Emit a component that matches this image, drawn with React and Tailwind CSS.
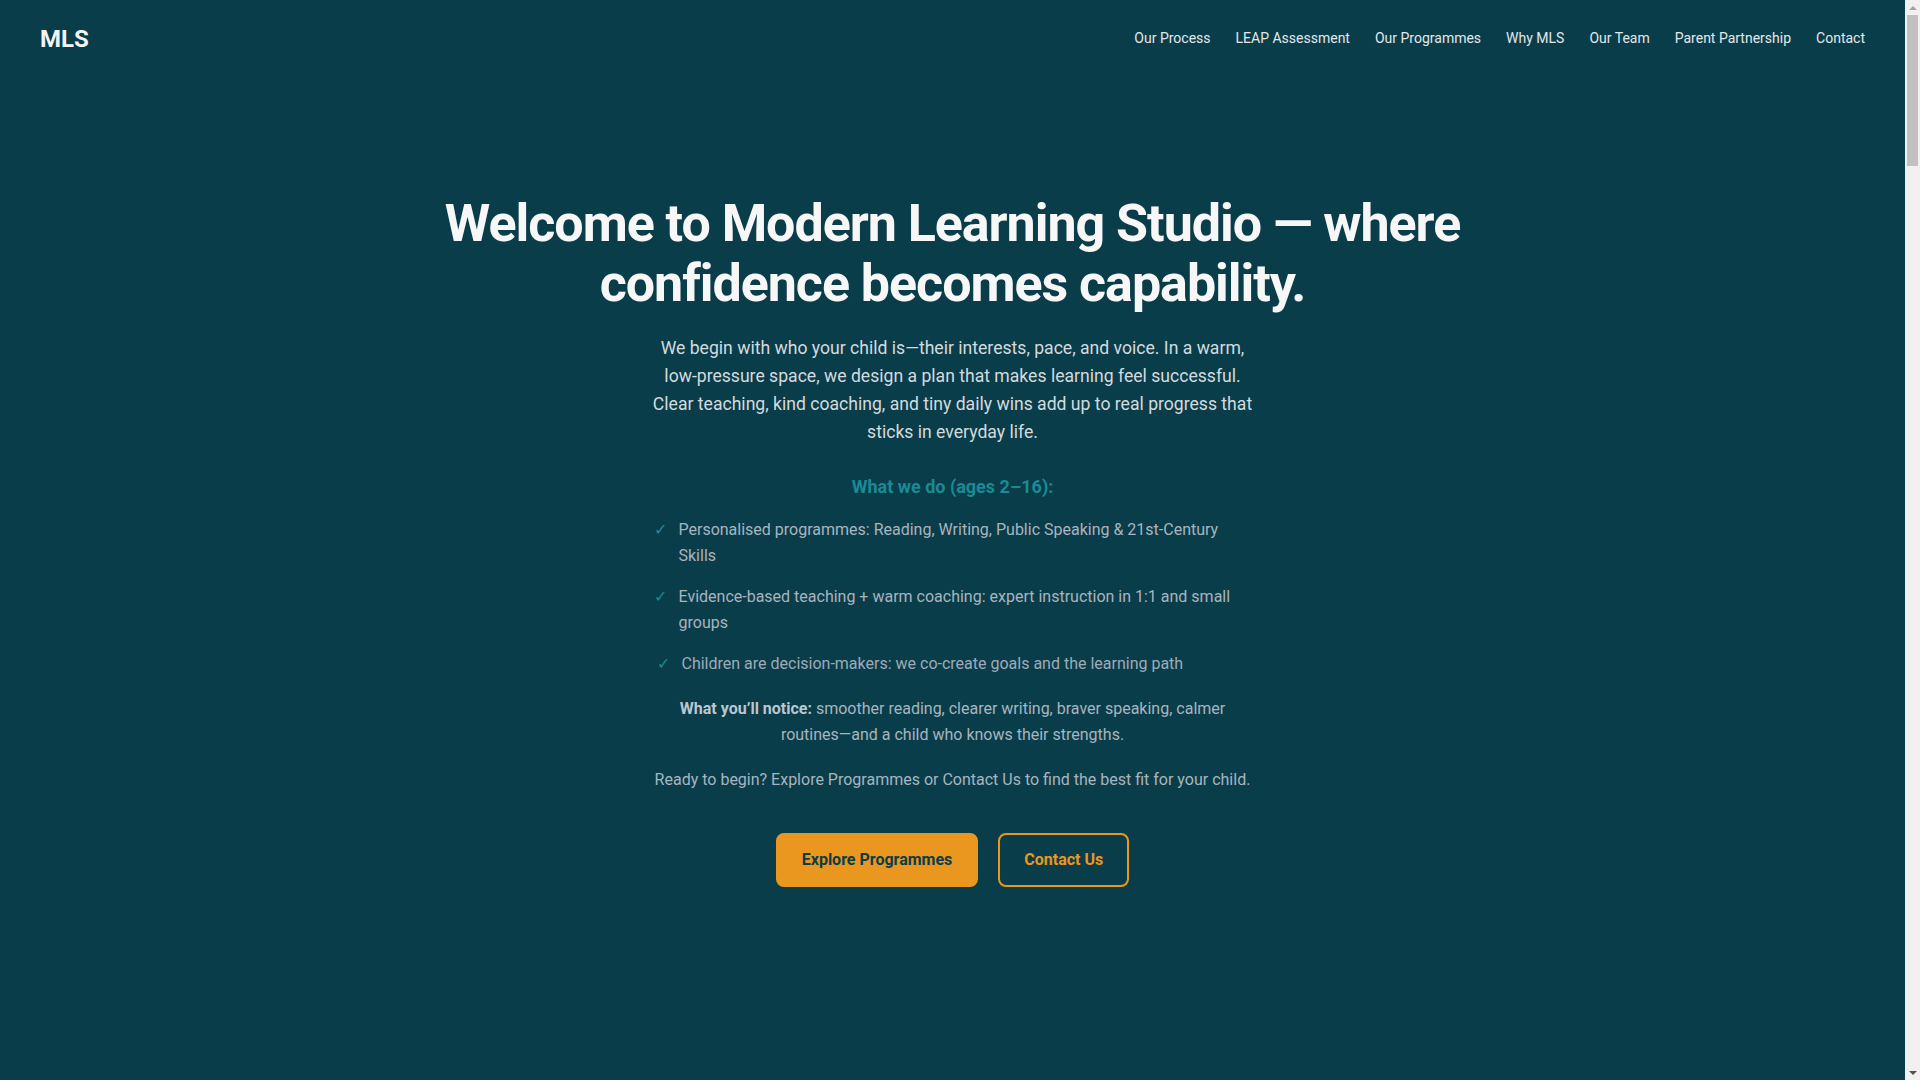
import React from "react";

const navLinks = [
  "Our Process",
  "LEAP Assessment",
  "Our Programmes",
  "Why MLS",
  "Our Team",
  "Parent Partnership",
  "Contact",
];

const whatWeDo = [
  "Personalised programmes: Reading, Writing, Public Speaking & 21st-Century Skills",
  "Evidence-based teaching + warm coaching: expert instruction in 1:1 and small groups",
  "Children are decision-makers: we co-create goals and the learning path",
];

function Scrollbar() {
  return (
    <div className="fixed top-0 right-0 h-screen w-[15px] bg-[#f1f1f1] flex flex-col items-center">
      <div className="h-[15px] flex items-center justify-center">
        <div className="w-0 h-0 border-l-[4px] border-r-[4px] border-b-[4px] border-l-transparent border-r-transparent border-b-[#a3a3a3]" />
      </div>
      <div className="w-[11px] h-[151px] bg-[#c1c1c1]" />
      <div className="flex-1" />
      <div className="h-[15px] flex items-center justify-center">
        <div className="w-0 h-0 border-l-[4px] border-r-[4px] border-t-[4px] border-l-transparent border-r-transparent border-t-[#505050]" />
      </div>
    </div>
  );
}

export default function App() {
  return (
    <div className="bg-[#0a3d4a] min-h-screen font-['Roboto','Liberation_Sans',sans-serif]">
      <div className="mr-[15px]">
        <header className="h-[77px] px-10 flex items-center justify-between">
          <a href="#" className="text-[24px] font-bold text-[#f3f4f4] leading-none">
            MLS
          </a>
          <nav className="flex items-center gap-[25px]">
            {navLinks.map((link) => (
              <a key={link} href="#" className="text-[14px] text-[#e2e8ea]">
                {link}
              </a>
            ))}
          </nav>
        </header>

        <section className="flex flex-col items-center text-center pt-[117px] pb-[150px]">
          <h1 className="text-[52px] leading-[60px] font-bold tracking-[-0.02em] text-[#f7f7f7] max-w-[1100px]">
            Welcome to Modern Learning Studio — where confidence becomes capability.
          </h1>

          <p className="mt-5 max-w-[600px] text-[17.6px] leading-[28px] text-[#d3dbdf]">
            We begin with who your child is—their interests, pace, and voice. In a warm,
            low-pressure space, we design a plan that makes learning feel successful.
            Clear teaching, kind coaching, and tiny daily wins add up to real progress that
            sticks in everyday life.
          </p>

          <h3 className="mt-[27px] text-[18px] leading-[28px] font-bold text-[#1a8b95]">
            What we do (ages 2–16):
          </h3>

          <ul className="mt-4 w-[600px] flex flex-col gap-[15px] text-left">
            {whatWeDo.map((item, i) => (
              <li
                key={i}
                className={
                  i === 2
                    ? "flex gap-[12px] pl-[4px] text-[16px] leading-[26px] text-[#9eabb7]"
                    : "flex gap-[12px] pl-[1px] text-[16px] leading-[26px] text-[#a8b4bf]"
                }
              >
                <span className="text-[#1a8b95] text-[16px] shrink-0">✓</span>
                <span>{item}</span>
              </li>
            ))}
          </ul>

          <p className="mt-[19px] max-w-[560px] text-[16px] leading-[26px] text-[#a8b4bf]">
            <strong className="font-bold text-[#bcc6cf]">What you’ll notice:</strong>{" "}
            smoother reading, clearer writing, braver speaking, calmer routines—and a
            child who knows their strengths.
          </p>

          <p className="mt-[19px] text-[16px] leading-[26px] text-[#a8b4bf]">
            Ready to begin? Explore Programmes or Contact Us to find the best fit for your child.
          </p>

          <div className="mt-[40px] flex gap-5">
            <a
              href="#"
              className="px-6 py-[13px] border-2 border-[#e9971e] bg-[#e9971e] rounded-lg text-[16px] leading-6 font-bold text-[#0a3d4a]"
            >
              Explore Programmes
            </a>
            <a
              href="#"
              className="px-6 py-[13px] border-2 border-[#e9971e] rounded-lg text-[16px] leading-6 font-bold text-[#e9971e]"
            >
              Contact Us
            </a>
          </div>
        </section>
      </div>
      <Scrollbar />
    </div>
  );
}
